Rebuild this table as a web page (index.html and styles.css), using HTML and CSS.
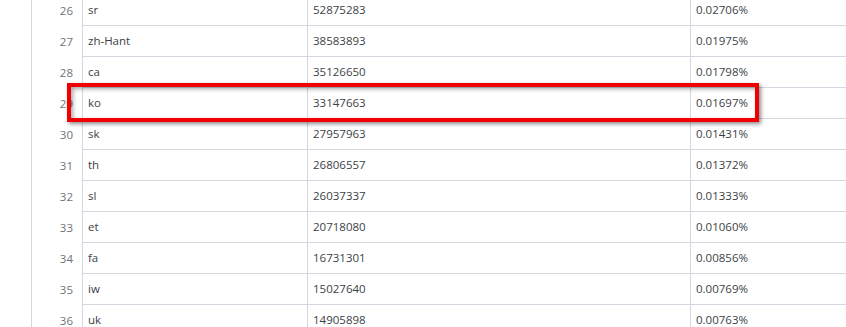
FILE: index.html
```html
<!DOCTYPE html>
<html>
<head>
<meta charset="utf-8">
<link rel="stylesheet" href="styles.css">
</head>
<body>
<div class="sheet">
  <table class="grid">
    <colgroup>
      <col class="c-num"><col class="c-lang"><col class="c-count"><col class="c-pct">
    </colgroup>
    <tbody>
      <tr><td class="num">26</td><td>sr</td><td>52875283</td><td>0.02706%</td></tr>
      <tr><td class="num">27</td><td>zh-Hant</td><td>38583893</td><td>0.01975%</td></tr>
      <tr><td class="num">28</td><td>ca</td><td>35126650</td><td>0.01798%</td></tr>
      <tr><td class="num">29</td><td>ko</td><td>33147663</td><td>0.01697%</td></tr>
      <tr><td class="num">30</td><td>sk</td><td>27957963</td><td>0.01431%</td></tr>
      <tr><td class="num">31</td><td>th</td><td>26806557</td><td>0.01372%</td></tr>
      <tr><td class="num">32</td><td>sl</td><td>26037337</td><td>0.01333%</td></tr>
      <tr><td class="num">33</td><td>et</td><td>20718080</td><td>0.01060%</td></tr>
      <tr><td class="num">34</td><td>fa</td><td>16731301</td><td>0.00856%</td></tr>
      <tr><td class="num">35</td><td>iw</td><td>15027640</td><td>0.00769%</td></tr>
      <tr><td class="num">36</td><td>uk</td><td>14905898</td><td>0.00763%</td></tr>
    </tbody>
  </table>
  <div class="highlight"></div>
</div>
</body>
</html>
```
FILE: styles.css
```css
html, body {
  margin: 0;
  padding: 0;
  background: #fff;
  overflow: hidden;
}
body {
  width: 846px;
  height: 327px;
  font-family: "Open Sans", "Noto Sans", sans-serif;
  font-size: 11.5px;
  color: #3b3f46;
}
.sheet {
  position: relative;
  padding-left: 31px;
  margin-top: -5px;
}
.grid {
  border-collapse: separate;
  border-spacing: 0;
  table-layout: fixed;
  width: 815px;
  border-left: 1px solid #d3d7df;
}
.c-num { width: 51px; }
.c-lang { width: 225px; }
.c-count { width: 383px; }
.c-pct { width: 156px; }
.grid td {
  height: 30px;
  padding: 0 0 0 5px;
  border-right: 1px solid #d3d7df;
  border-bottom: 1px solid #d3d7df;
  white-space: nowrap;
  vertical-align: middle;
  line-height: 16px;
}
.grid td:last-child {
  border-right: none;
}
.grid td.num {
  text-align: right;
  padding: 0 9px 0 0;
  color: #6f7378;
  border-bottom: none;
}
.highlight {
  position: absolute;
  left: 67px;
  top: 88px;
  width: 684px;
  height: 31px;
  border: 4px solid #f00000;
  box-shadow: 2px 2px 4px rgba(0,0,0,0.45), inset 2px 2px 4px rgba(0,0,0,0.35);
}
```
